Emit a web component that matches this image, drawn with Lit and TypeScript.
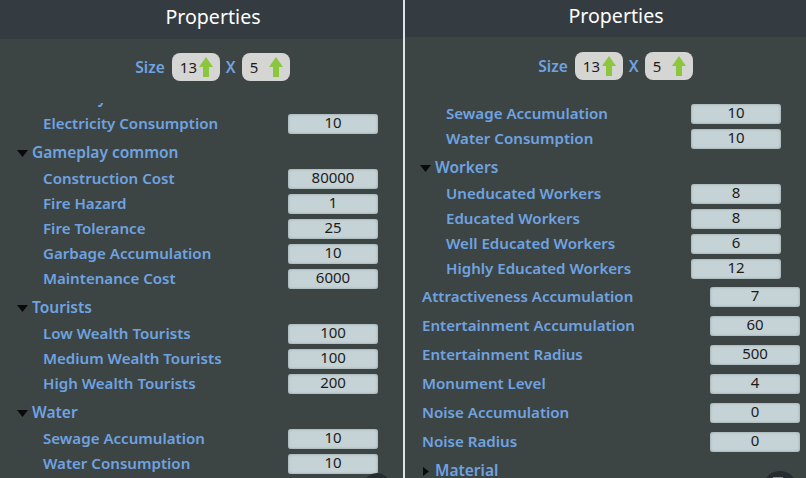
import { LitElement, html, css } from 'lit'
import { customElement, property } from 'lit/decorators.js'

type Item =
  | { kind: 'section', label: string, open: boolean }
  | { kind: 'row', label: string, value: string }
  | { kind: 'top', label: string, value: string }

const leftItems: Item[] = [
  { kind: 'section', label: 'Electricity', open: true },
  { kind: 'row', label: 'Electricity Consumption', value: '10' },
  { kind: 'section', label: 'Gameplay common', open: true },
  { kind: 'row', label: 'Construction Cost', value: '80000' },
  { kind: 'row', label: 'Fire Hazard', value: '1' },
  { kind: 'row', label: 'Fire Tolerance', value: '25' },
  { kind: 'row', label: 'Garbage Accumulation', value: '10' },
  { kind: 'row', label: 'Maintenance Cost', value: '6000' },
  { kind: 'section', label: 'Tourists', open: true },
  { kind: 'row', label: 'Low Wealth Tourists', value: '100' },
  { kind: 'row', label: 'Medium Wealth Tourists', value: '100' },
  { kind: 'row', label: 'High Wealth Tourists', value: '200' },
  { kind: 'section', label: 'Water', open: true },
  { kind: 'row', label: 'Sewage Accumulation', value: '10' },
  { kind: 'row', label: 'Water Consumption', value: '10' }
]

const rightItems: Item[] = [
  { kind: 'row', label: 'Sewage Accumulation', value: '10' },
  { kind: 'row', label: 'Water Consumption', value: '10' },
  { kind: 'section', label: 'Workers', open: true },
  { kind: 'row', label: 'Uneducated Workers', value: '8' },
  { kind: 'row', label: 'Educated Workers', value: '8' },
  { kind: 'row', label: 'Well Educated Workers', value: '6' },
  { kind: 'row', label: 'Highly Educated Workers', value: '12' },
  { kind: 'top', label: 'Attractiveness Accumulation', value: '7' },
  { kind: 'top', label: 'Entertainment Accumulation', value: '60' },
  { kind: 'top', label: 'Entertainment Radius', value: '500' },
  { kind: 'top', label: 'Monument Level', value: '4' },
  { kind: 'top', label: 'Noise Accumulation', value: '0' },
  { kind: 'top', label: 'Noise Radius', value: '0' },
  { kind: 'section', label: 'Material', open: false }
]

const arrow = html`<svg class="arrow" width="14" height="20" viewBox="0 0 14 20"><path d="M7 0 L14 10 H10 V20 H4 V10 H0 Z" fill="#8cc63f"/></svg>`

@customElement('props-panel')
export class PropsPanel extends LitElement {
  static styles = css`
    :host {
      display: flex;
      flex-direction: column;
      position: relative;
      height: 478px;
      overflow: hidden;
      background: #3d4444;
      font-family: "Noto Sans", sans-serif;
      color: #6fa3e0;
    }
    :host(.right)::after {
      content: "";
      position: absolute;
      left: 0;
      top: 0;
      bottom: 0;
      width: 2px;
      background: #dfe3e4;
    }
    header {
      flex: none;
      height: 39px;
      padding-left: 23px;
      background: #343c42;
      color: #fff;
      font-size: 19.6px;
      line-height: 34px;
      text-align: center;
      box-sizing: border-box;
    }
    :host(.right) header { height: 37px; line-height: 32px; }
    .size {
      flex: none;
      height: 64px;
      display: flex;
      justify-content: center;
      align-items: center;
      font-size: 15.5px;
      font-weight: 600;
      gap: 5px;
      padding: 0 0 8px 22px;
      box-sizing: border-box;
    }
    :host(.right) .size { height: 66px; }
    .size .word { margin-right: 2px; }
    .size .times { margin: 0 1px; }
    .stepper {
      width: 48px;
      height: 28px;
      border-radius: 8px;
      background: #d5d5d3;
      color: #1c1c1c;
      font-size: 15px;
      font-weight: 400;
      display: flex;
      align-items: center;
      justify-content: space-between;
      padding: 0 7px 0 8px;
      box-sizing: border-box;
    }
    .arrow { display: block; flex: none; }
    .list { flex: 1; overflow: hidden; }
    .inner { margin-top: -22px; }
    :host(.right) .inner { margin-top: -2px; }
    .section {
      height: 25px;
      margin-top: 4px;
      padding-left: 17px;
      display: flex;
      align-items: center;
      gap: 4px;
      font-size: 15.5px;
      font-weight: 600;
      white-space: nowrap;
    }
    .section span { padding-bottom: 2px; }
    .top + .section { margin-top: 2px; }
    .tri { width: 11px; display: block; flex: none; margin-top: 1px; }
    .row, .top {
      display: flex;
      align-items: center;
      justify-content: space-between;
      height: 25px;
      font-size: 15.1px;
      font-weight: 600;
      white-space: nowrap;
    }
    .row > span, .top > span { padding-bottom: 2px; }
    .row { padding: 0 25px 0 43px; }
    .section + .row { margin-top: 1px; }
    .top { height: 29px; padding: 0 6px 0 19px; }
    .row + .top { margin-top: 1px; }
    .input {
      width: 90px;
      height: 20px;
      border-radius: 3px;
      background: #c5d2d6;
      box-shadow: inset 0 0 3px #8c9ba0;
      color: #1c1c1c;
      font-size: 15px;
      font-weight: 400;
      line-height: 17px;
      text-align: center;
    }
    .orb {
      position: absolute;
      right: 14px;
      bottom: -15px;
      width: 24px;
      height: 20px;
      border-radius: 50%;
      background: #262c30;
    }
    :host(.right) .orb {
      right: 11px;
      bottom: -17px;
      width: 30px;
      height: 24px;
    }
    :host(.right) .orb::after {
      content: "";
      position: absolute;
      left: 8px;
      top: 6px;
      width: 10px;
      height: 2px;
      background: #8b9296;
    }
  `

  @property({ attribute: false }) items: Item[] = []

  renderItem (item: Item) {
    if (item.kind === 'section') {
      return html`<div class="section">
        ${item.open
          ? html`<svg class="tri" height="7" viewBox="0 0 11 7"><path d="M0 0 H11 L5.5 7 Z" fill="#0a0a0a"/></svg>`
          : html`<svg class="tri" height="9" viewBox="0 0 11 9"><path d="M3 0 L9 4.5 L3 9 Z" fill="#0a0a0a"/></svg>`}
        <span>${item.label}</span>
      </div>`
    }
    return html`<div class="${item.kind}">
      <span>${item.label}</span>
      <div class="input">${item.value}</div>
    </div>`
  }

  render () {
    return html`
      <header>Properties</header>
      <div class="size">
        <span class="word">Size</span>
        <div class="stepper"><span>13</span>${arrow}</div>
        <span class="times">X</span>
        <div class="stepper"><span>5</span>${arrow}</div>
      </div>
      <div class="list">
        <div class="inner">${this.items.map(item => this.renderItem(item))}</div>
      </div>
      <div class="orb"></div>
    `
  }
}

@customElement('app-root')
export class AppRoot extends LitElement {
  static styles = css`
    :host {
      display: grid;
      grid-template-columns: 403px 403px;
      height: 478px;
      width: 806px;
      overflow: hidden;
    }
  `

  render () {
    return html`
      <props-panel .items=${leftItems}></props-panel>
      <props-panel class="right" .items=${rightItems}></props-panel>
    `
  }
}
